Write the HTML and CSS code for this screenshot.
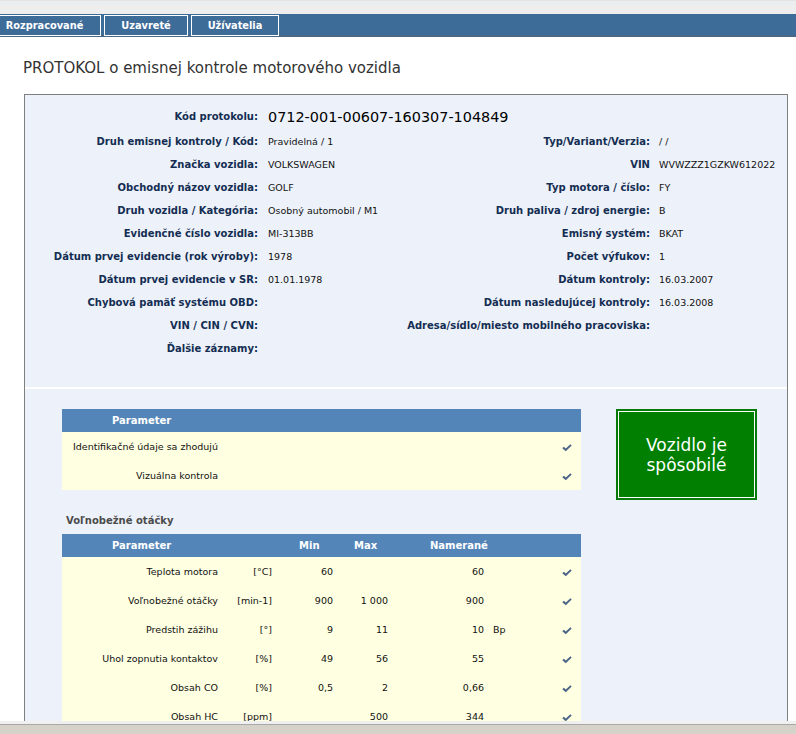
FILE: index.html
```html
<!DOCTYPE html>
<html lang="sk">
<head>
<meta charset="utf-8">
<title>PROTOKOL o emisnej kontrole motorového vozidla</title>
<link rel="stylesheet" href="styles.css">
</head>
<body>
<div class="topstrip"></div>
<nav class="tabs">
  <a class="tab tab-first">Rozpracované</a>
  <a class="tab tab-second">Uzavreté</a>
  <a class="tab tab-third">Užívatelia</a>
</nav>
<h1 class="title">PROTOKOL o emisnej kontrole motorového vozidla</h1>
<div class="protocol">
  <div class="info">
    <div class="lbl first">Kód protokolu:</div><div class="val code">0712-001-00607-160307-104849</div>
    <div class="lbl">Druh emisnej kontroly / Kód:</div><div class="val">Pravidelná / 1</div><div class="lbl r">Typ/Variant/Verzia:</div><div class="val">/ /</div>
    <div class="lbl">Značka vozidla:</div><div class="val">VOLKSWAGEN</div><div class="lbl r">VIN</div><div class="val">WVWZZZ1GZKW612022</div>
    <div class="lbl">Obchodný názov vozidla:</div><div class="val">GOLF</div><div class="lbl r">Typ motora / číslo:</div><div class="val">FY</div>
    <div class="lbl">Druh vozidla / Kategória:</div><div class="val">Osobný automobil / M1</div><div class="lbl r">Druh paliva / zdroj energie:</div><div class="val">B</div>
    <div class="lbl">Evidenčné číslo vozidla:</div><div class="val">MI-313BB</div><div class="lbl r">Emisný systém:</div><div class="val">BKAT</div>
    <div class="lbl">Dátum prvej evidencie (rok výroby):</div><div class="val">1978</div><div class="lbl r">Počet výfukov:</div><div class="val">1</div>
    <div class="lbl">Dátum prvej evidencie v SR:</div><div class="val">01.01.1978</div><div class="lbl r">Dátum kontroly:</div><div class="val">16.03.2007</div>
    <div class="lbl">Chybová pamäť systému OBD:</div><div class="val"></div><div class="lbl r">Dátum nasledujúcej kontroly:</div><div class="val">16.03.2008</div>
    <div class="lbl">VIN / CIN / CVN:</div><div class="val"></div><div class="lbl r">Adresa/sídlo/miesto mobilného pracoviska:</div><div class="val"></div>
    <div class="lbl">Ďalšie záznamy:</div><div class="val"></div><div class="lbl r"></div><div class="val"></div>
  </div>
  <div class="lower">
    <div class="tables">
      <table class="ptable">
        <colgroup><col class="c-name"><col class="c-wide"><col class="c-chk"></colgroup>
        <thead><tr><th class="h-param" colspan="3">Parameter</th></tr></thead>
        <tbody>
          <tr><td>Identifikačné údaje sa zhodujú</td><td></td><td class="chk"><svg class="tick" viewBox="0 0 10 8" width="10" height="8"><path d="M0.3 4.3 L1.9 2.8 L3.8 4.6 L8.4 0.2 L9.7 1.4 L3.8 7.3 Z"/></svg></td></tr>
          <tr><td>Vizuálna kontrola</td><td></td><td class="chk"><svg class="tick" viewBox="0 0 10 8" width="10" height="8"><path d="M0.3 4.3 L1.9 2.8 L3.8 4.6 L8.4 0.2 L9.7 1.4 L3.8 7.3 Z"/></svg></td></tr>
        </tbody>
      </table>
      <div class="section">Voľnobežné otáčky</div>
      <table class="ptable">
        <colgroup><col class="c-name"><col class="c-unit"><col class="c-min"><col class="c-max"><col class="c-nam"><col class="c-ext"><col class="c-chk"></colgroup>
        <thead><tr><th class="h-param">Parameter</th><th></th><th class="h-min">Min</th><th class="h-max">Max</th><th class="h-nam">Namerané</th><th></th><th></th></tr></thead>
        <tbody>
          <tr><td>Teplota motora</td><td>[°C]</td><td>60</td><td></td><td>60</td><td class="ext"></td><td class="chk"><svg class="tick" viewBox="0 0 10 8" width="10" height="8"><path d="M0.3 4.3 L1.9 2.8 L3.8 4.6 L8.4 0.2 L9.7 1.4 L3.8 7.3 Z"/></svg></td></tr>
          <tr><td>Voľnobežné otáčky</td><td>[min-1]</td><td>900</td><td>1 000</td><td>900</td><td class="ext"></td><td class="chk"><svg class="tick" viewBox="0 0 10 8" width="10" height="8"><path d="M0.3 4.3 L1.9 2.8 L3.8 4.6 L8.4 0.2 L9.7 1.4 L3.8 7.3 Z"/></svg></td></tr>
          <tr><td>Predstih zážihu</td><td>[°]</td><td>9</td><td>11</td><td>10</td><td class="ext">Bp</td><td class="chk"><svg class="tick" viewBox="0 0 10 8" width="10" height="8"><path d="M0.3 4.3 L1.9 2.8 L3.8 4.6 L8.4 0.2 L9.7 1.4 L3.8 7.3 Z"/></svg></td></tr>
          <tr><td>Uhol zopnutia kontaktov</td><td>[%]</td><td>49</td><td>56</td><td>55</td><td class="ext"></td><td class="chk"><svg class="tick" viewBox="0 0 10 8" width="10" height="8"><path d="M0.3 4.3 L1.9 2.8 L3.8 4.6 L8.4 0.2 L9.7 1.4 L3.8 7.3 Z"/></svg></td></tr>
          <tr><td>Obsah CO</td><td>[%]</td><td>0,5</td><td>2</td><td>0,66</td><td class="ext"></td><td class="chk"><svg class="tick" viewBox="0 0 10 8" width="10" height="8"><path d="M0.3 4.3 L1.9 2.8 L3.8 4.6 L8.4 0.2 L9.7 1.4 L3.8 7.3 Z"/></svg></td></tr>
          <tr><td>Obsah HC</td><td>[ppm]</td><td></td><td>500</td><td>344</td><td class="ext"></td><td class="chk"><svg class="tick" viewBox="0 0 10 8" width="10" height="8"><path d="M0.3 4.3 L1.9 2.8 L3.8 4.6 L8.4 0.2 L9.7 1.4 L3.8 7.3 Z"/></svg></td></tr>
        </tbody>
      </table>
    </div>
    <div class="verdict">Vozidlo je<br>spôsobilé</div>
  </div>
</div>
<div class="hbar"></div>
</body>
</html>
```
FILE: styles.css
```css
html, body {
  margin: 0;
  padding: 0;
  height: 734px;
  overflow: hidden;
}
body {
  background: #fff;
  font-family: "DejaVu Sans", Verdana, sans-serif;
  color: #000;
}
.topstrip {
  height: 14px;
  background: linear-gradient(#e4e4e4 0, #e4e4e4 1px, #eaeef1 1px, #eaeef1 5px, #eeeeee 5px);
}
.tabs {
  display: flex;
  gap: 3px;
  height: 20px;
  padding-top: 1px;
  background: #3e6c99;
  border-bottom: 2px solid #4a6886;
}
.tab {
  box-sizing: border-box;
  height: 21px;
  border: 1px solid #fff;
  color: #fff;
  font-weight: bold;
  font-size: 9.8px;
  line-height: 19px;
  text-align: center;
  flex: none;
}
.tab-first { width: 113px; margin-left: -12px; }
.tab-second { width: 84px; }
.tab-third { width: 88px; }
.title {
  margin: 22px 0 17px 23px;
  font-size: 15px;
  line-height: 18px;
  font-weight: normal;
  color: #333;
}
.protocol {
  margin-left: 24px;
  width: 764px;
  box-sizing: border-box;
  border: 1px solid #7f7f7f;
  background: #edf2fa;
}
.info {
  display: grid;
  grid-template-columns: 243px 132px 259px 1fr;
  grid-template-rows: 26px;
  grid-auto-rows: 23px;
  padding: 9px 0 27px;
  border-bottom: 2px solid #fff;
}
.lbl {
  text-align: right;
  padding-right: 10px;
  font-weight: bold;
  font-size: 10px;
  line-height: 23px;
  color: #142d52;
  white-space: nowrap;
}
.lbl.r { padding-right: 9px; }
.lbl.first { line-height: 26px; }
.val {
  font-size: 9.5px;
  line-height: 23px;
  color: #111;
  white-space: nowrap;
}
.val.code {
  grid-column: 2 / 5;
  font-size: 14.4px;
  line-height: 26px;
  color: #000;
}
.lower {
  display: flex;
  align-items: flex-start;
  padding: 20px 0 40px 37px;
}
.tables { width: 519px; flex: none; }
.ptable {
  width: 519px;
  border-collapse: collapse;
  border-spacing: 0;
  table-layout: fixed;
  font-size: 9.5px;
}
.c-name { width: 156px; }
.c-wide { width: 326px; }
.c-unit { width: 54px; }
.c-min { width: 61px; }
.c-max { width: 55px; }
.c-nam { width: 96px; }
.c-ext { width: 60px; }
.c-chk { width: 37px; }
.ptable th {
  background: #5485b8;
  color: #fff;
  font-weight: bold;
  font-size: 10px;
  height: 23px;
  padding: 0;
  text-align: left;
  white-space: nowrap;
}
.ptable .h-param { text-indent: 50px; }
.ptable .h-min { text-indent: 27px; }
.ptable .h-max { text-indent: 21px; }
.ptable .h-nam { text-indent: 42px; }
.ptable td {
  background: #ffffe1;
  height: 29px;
  padding: 0;
  text-align: right;
  white-space: nowrap;
  color: #111;
}
.ptable td.ext { text-align: left; text-indent: 9px; }
.ptable td.chk { text-align: left; text-indent: 18px; }
.tick {
  display: inline-block;
  vertical-align: middle;
  fill: #4a6588;
}
.section {
  font-weight: bold;
  font-size: 10px;
  line-height: 14px;
  color: #4b4b4b;
  margin: 24px 0 6px 4px;
}
.verdict {
  flex: none;
  margin-left: 35px;
  width: 141px;
  height: 91px;
  box-sizing: border-box;
  border: 2px solid #077a07;
  box-shadow: inset 0 0 0 1px #fff;
  background: #007f00;
  color: #fff;
  font-size: 17px;
  line-height: 20px;
  display: flex;
  align-items: center;
  justify-content: center;
  text-align: center;
}
.hbar {
  position: fixed;
  left: 0;
  right: 0;
  bottom: 0;
  height: 13px;
  background: linear-gradient(#f0f0f0 0, #f0f0f0 3px, #a8a8a8 3px, #a8a8a8 4px, #d6d2ca 4px);
}
```
